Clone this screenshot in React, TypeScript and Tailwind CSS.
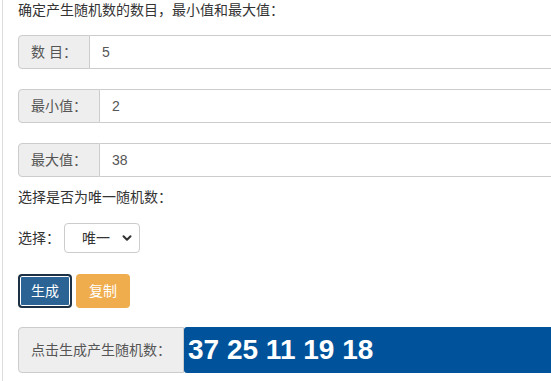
import { ChevronDown } from 'lucide-react';

const font = { fontFamily: '"Liberation Sans", "Noto Sans CJK SC", sans-serif' };

function Field({ label, value, className }: { label: string; value: string; className?: string }) {
	return (
		<div className={`flex h-[34px] w-[600px] ${className ?? ''}`}>
			<span className="flex items-center whitespace-pre rounded-l border border-[#ccc] bg-[#eee] px-3 text-sm text-[#555]">
				{label}
			</span>
			<div className="flex flex-1 items-center rounded-r border border-l-0 border-[#ccc] bg-white px-3 text-sm text-[#555]">
				{value}
			</div>
		</div>
	);
}

export default function App() {
	return (
		<div className="h-[381px] w-full overflow-hidden bg-white" style={font}>
			<div className="ml-[2px] h-full border-l border-[#ddd] pl-[15px] text-sm text-[#333]">
				<p className="leading-5">确定产生随机数的数目，最小值和最大值：</p>

				<Field label="数 目：" value="5" className="mt-[15px]" />
				<Field label="最小值：" value="2" className="mt-5" />
				<Field label="最大值：" value="38" className="mt-5" />

				<p className="mt-[10px] leading-5">选择是否为唯一随机数：</p>

				<div className="mt-[16px] flex items-center">
					<span className="w-[46px]">选择：</span>
					<div className="flex h-[30px] w-[76px] items-center justify-between rounded border border-[#ccc] bg-white pl-[17px] pr-[5px] text-[#333]">
						<span>唯一</span>
						<ChevronDown className="size-[14px]" strokeWidth={3.5} />
					</div>
				</div>

				<div className="mt-[21px] flex gap-1">
					<button className="h-[34px] w-[54px] rounded border-2 border-[#1d3144] bg-[#2a6394] text-sm text-white shadow-[inset_0_0_0_1px_#fff]">
						生成
					</button>
					<button className="h-[34px] w-[54px] rounded bg-[#f0ad4e] text-sm text-white">
						复制
					</button>
				</div>

				<div className="mt-[19px] flex h-[46px] w-[600px]">
					<span className="flex items-center rounded-l border border-[#ccc] bg-[#eee] px-3 text-sm text-[#555]">
						点击生成产生随机数：
					</span>
					<div className="flex flex-1 items-center rounded-l-[3px] bg-[#00539b] pl-[4px] text-[28px] font-bold text-white">
						37 25 11 19 18
					</div>
				</div>
			</div>
		</div>
	);
}
